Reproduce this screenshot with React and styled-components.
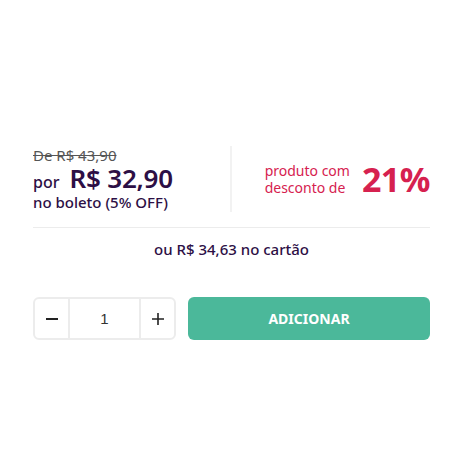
import React, { useState } from "react";
import styled, { createGlobalStyle } from "styled-components";

const COLORS = {
  purple: "#2d0f45",
  red: "#d6214f",
  gray: "#555555",
  line: "#ececec",
  green: "#4bb89a",
};

const GlobalStyle = createGlobalStyle`
  body {
    margin: 0;
    background: #fff;
    font-family: "Noto Sans", "Open Sans", sans-serif;
  }
`;

const Wrapper = styled.div`
  width: 470px;
  height: 470px;
  box-sizing: border-box;
  padding: 146px 40px 0 33px;
`;

const PriceRow = styled.div`
  display: grid;
  grid-template-columns: 1fr 1fr;
  padding-bottom: 15px;
  border-bottom: 1px solid ${COLORS.line};
`;

const Left = styled.div`
  display: flex;
  flex-direction: column;
  border-right: 2px solid #f2f2f2;
`;

const OldPrice = styled.span`
  font-size: 15px;
  color: ${COLORS.gray};
  text-decoration: line-through;
  line-height: 18px;
`;

const MainLine = styled.div`
  display: flex;
  align-items: baseline;
  gap: 10px;
  height: 28px;
  padding-top: 1px;
  box-sizing: border-box;
  color: ${COLORS.purple};
`;

const Por = styled.span`
  font-size: 16px;
  font-weight: 500;
  line-height: 16px;
`;

const BigPrice = styled.span`
  font-size: 26px;
  font-weight: 600;
  line-height: 26px;
  letter-spacing: -0.2px;
`;

const Boleto = styled.span`
  font-size: 15px;
  font-weight: 500;
  color: ${COLORS.purple};
  line-height: 20px;
`;

const Right = styled.div`
  display: flex;
  align-items: center;
  justify-content: flex-end;
  gap: 12px;
  color: ${COLORS.red};
`;

const DiscountLabel = styled.span`
  font-size: 14px;
  line-height: 17px;
`;

const DiscountValue = styled.span`
  font-size: 34px;
  font-weight: 700;
  line-height: 34px;
  letter-spacing: -0.5px;
`;

const Card = styled.p`
  margin: 11px 0 0;
  text-align: center;
  font-size: 15px;
  font-weight: 500;
  line-height: 20px;
  color: ${COLORS.purple};
`;

const Actions = styled.div`
  display: flex;
  gap: 12px;
  margin-top: 38px;
`;

const Quantity = styled.div`
  display: grid;
  grid-template-columns: 35px 1fr 35px;
  width: 143px;
  height: 43px;
  box-sizing: border-box;
  border: 2px solid ${COLORS.line};
  border-radius: 6px;
`;

const QtyButton = styled.button`
  all: unset;
  display: flex;
  align-items: center;
  justify-content: center;
  color: #333;
  cursor: pointer;
  border-left: ${(p) => (p.$side === "right" ? `2px solid ${COLORS.line}` : "none")};
  border-right: ${(p) => (p.$side === "left" ? `2px solid ${COLORS.line}` : "none")};
`;

const QtyValue = styled.span`
  display: flex;
  align-items: center;
  justify-content: center;
  font-family: "Liberation Sans", Arial, sans-serif;
  font-size: 15px;
  color: #333;
`;

const AddButton = styled.button`
  all: unset;
  flex: 1;
  height: 43px;
  border-radius: 6px;
  background: ${COLORS.green};
  color: #fff;
  font-size: 14px;
  font-weight: 700;
  text-align: center;
  cursor: pointer;
`;

const Minus = () => (
  <svg width="14" height="14" viewBox="0 0 14 14">
    <path d="M1 7h12" stroke="#222" strokeWidth="2" />
  </svg>
);

const Plus = () => (
  <svg width="14" height="14" viewBox="0 0 14 14">
    <path d="M1 7h12M7 1v12" stroke="#222" strokeWidth="1.6" />
  </svg>
);

export default function App() {
  const [qty, setQty] = useState(1);
  return (
    <>
      <GlobalStyle />
      <Wrapper>
        <PriceRow>
          <Left>
            <OldPrice>De R$ 43,90</OldPrice>
            <MainLine>
              <Por>por</Por>
              <BigPrice>R$ 32,90</BigPrice>
            </MainLine>
            <Boleto>no boleto (5% OFF)</Boleto>
          </Left>
          <Right>
            <DiscountLabel>
              produto com
              <br />
              desconto de
            </DiscountLabel>
            <DiscountValue>21%</DiscountValue>
          </Right>
        </PriceRow>
        <Card>ou R$ 34,63 no cartão</Card>
        <Actions>
          <Quantity>
            <QtyButton $side="left" onClick={() => setQty(Math.max(1, qty - 1))}>
              <Minus />
            </QtyButton>
            <QtyValue>{qty}</QtyValue>
            <QtyButton $side="right" onClick={() => setQty(qty + 1)}>
              <Plus />
            </QtyButton>
          </Quantity>
          <AddButton>ADICIONAR</AddButton>
        </Actions>
      </Wrapper>
    </>
  );
}
